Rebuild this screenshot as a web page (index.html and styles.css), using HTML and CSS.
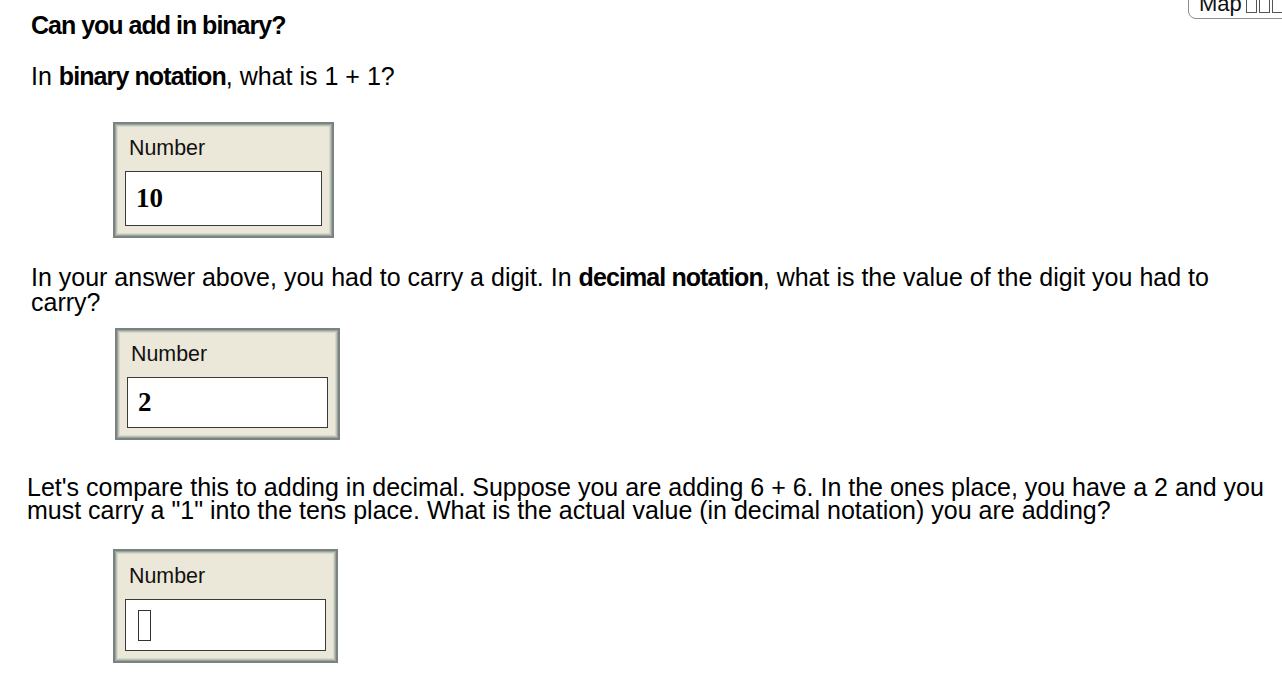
FILE: index.html
```html
<!DOCTYPE html>
<html>
<head>
<meta charset="utf-8">
<link rel="stylesheet" href="styles.css">
</head>
<body>
<div class="map-btn">Map<span class="tofu"></span><span class="tofu"></span><span class="tofu"></span></div>
<main class="page">
  <h1 class="title">Can you add in binary?</h1>
  <p class="q q1">In <b>binary notation</b>, what is 1 + 1?</p>
  <div class="answer a1">
    <div class="label">Number</div>
    <div class="field"><span class="val">10</span></div>
  </div>
  <p class="q q2">In your answer above, you had to carry a digit. In <b>decimal notation</b>, what is the value of the digit you had to carry?</p>
  <div class="answer a2">
    <div class="label">Number</div>
    <div class="field"><span class="val">2</span></div>
  </div>
  <p class="q q3">Let's compare this to adding in decimal. Suppose you are adding 6 + 6. In the ones place, you have a 2 and you must carry a "1" into the tens place. What is the actual value (in decimal notation) you are adding?</p>
  <div class="answer a3">
    <div class="label">Number</div>
    <div class="field"><span class="caret"></span></div>
  </div>
</main>
</body>
</html>
```

FILE: styles.css
```css
html, body {
  margin: 0;
  padding: 0;
  background: #ffffff;
}
body {
  font-family: "Liberation Sans", Arial, sans-serif;
  color: #000;
  width: 1282px;
  height: 676px;
  overflow: hidden;
  position: relative;
}
.page {
  padding: 12px 0 0 31px;
  display: flex;
  flex-direction: column;
  align-items: flex-start;
}
.title {
  margin: 0;
  font-size: 25px;
  font-weight: bold;
  line-height: 26px;
  letter-spacing: -1px;
}
.q {
  margin: 0;
  font-size: 25px;
  line-height: 25px;
}
.q b {
  letter-spacing: -0.9px;
}
.q1 {
  margin-top: 25px;
  line-height: 26px;
}
.q2 {
  margin-top: 26.5px;
  width: 1215px;
}
.q3 {
  margin-top: 35.5px;
  margin-left: -4px;
  width: 1250px;
  line-height: 23px;
}
.answer {
  box-sizing: border-box;
  background: #ebe8d9;
  border: 2px solid #7b8380;
  box-shadow: inset 0 0 0 1px #9aa29c, inset 0 0 0 2px #bcc2b8, inset 0 0 0 3px #d6d8c9;
  display: flex;
  flex-direction: column;
  padding: 0 10px 10px 10px;
}
.a1 {
  margin: 33px 0 0 82px;
  width: 221px;
  height: 116px;
}
.a2 {
  margin: 13.5px 0 0 84px;
  width: 225px;
  height: 112px;
}
.a3 {
  margin: 27.5px 0 0 82px;
  width: 225px;
  height: 114px;
}
.label {
  font-size: 21.4px;
  height: 47px;
  line-height: 48px;
  padding-left: 4px;
  color: #111;
}
.a3 .label {
  height: 48px;
  line-height: 50px;
}
.field {
  flex: 1;
  background: #fff;
  border: 1px solid #3a3a3a;
  display: flex;
  align-items: center;
  padding-left: 10px;
}
.val {
  font-family: "Liberation Serif", "Times New Roman", serif;
  font-weight: bold;
  font-size: 27px;
}
.caret {
  display: inline-block;
  width: 13px;
  height: 31px;
  border: 1px solid #333;
  box-sizing: border-box;
  margin-left: 2px;
}
.map-btn {
  position: absolute;
  top: -11px;
  left: 1188px;
  width: 110px;
  height: 30px;
  box-sizing: border-box;
  border: 1px solid #8a8f8c;
  border-radius: 8px;
  background: #fff;
  font-size: 22px;
  line-height: 24px;
  padding-left: 10px;
  color: #111;
  display: flex;
  align-items: flex-end;
  padding-bottom: 2px;
}
.tofu {
  display: inline-block;
  width: 11px;
  height: 18px;
  border: 1px solid #555;
  box-sizing: border-box;
  margin-left: 2px;
  margin-bottom: 3px;
}
.tofu:first-of-type {
  margin-left: 4px;
}
```
